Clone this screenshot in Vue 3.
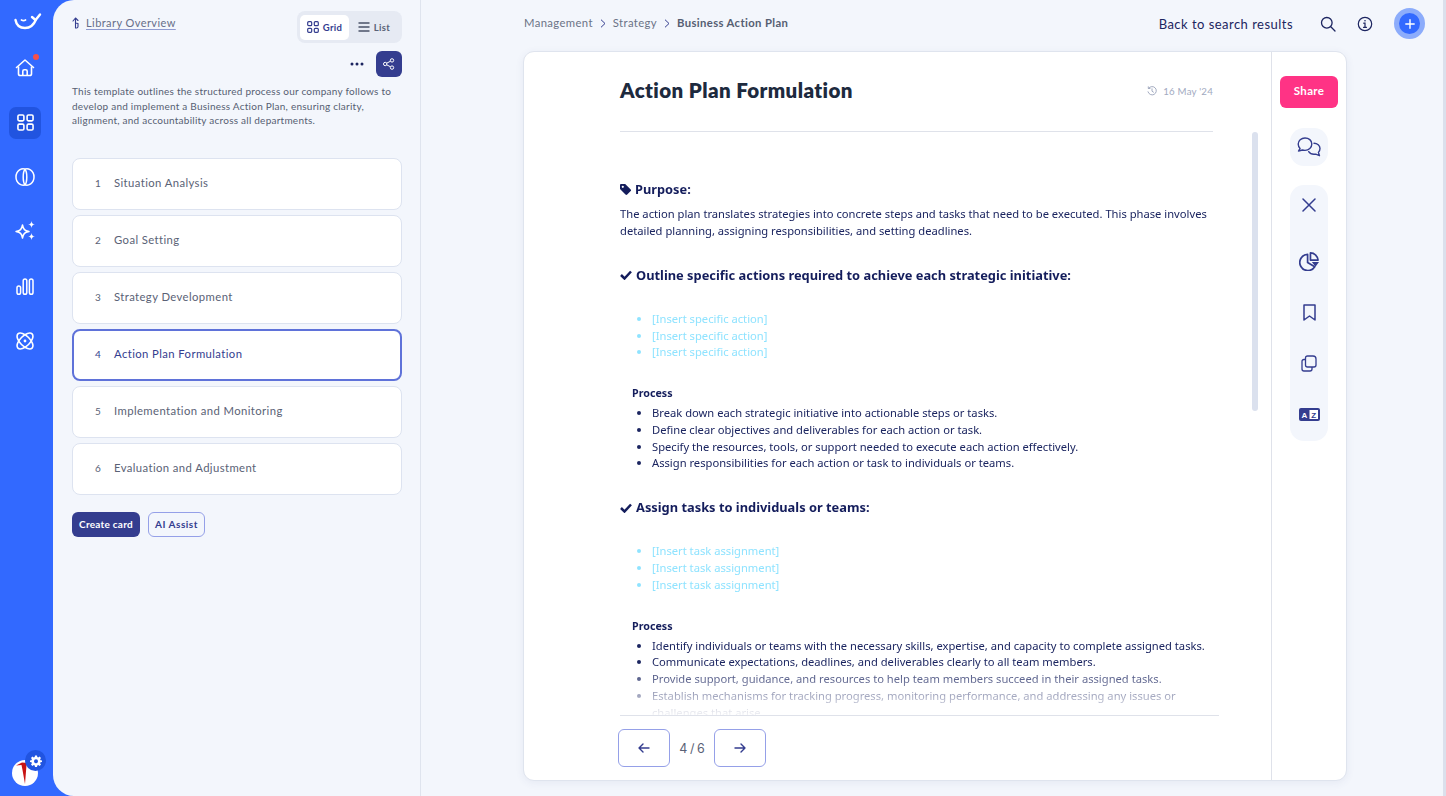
<script setup>
const steps = [
  'Situation Analysis',
  'Goal Setting',
  'Strategy Development',
  'Action Plan Formulation',
  'Implementation and Monitoring',
  'Evaluation and Adjustment'
]
const sections = [
  {
    title: 'Outline specific actions required to achieve each strategic initiative:',
    placeholder: '[Insert specific action]',
    process: [
      'Break down each strategic initiative into actionable steps or tasks.',
      'Define clear objectives and deliverables for each action or task.',
      'Specify the resources, tools, or support needed to execute each action effectively.',
      'Assign responsibilities for each action or task to individuals or teams.'
    ]
  },
  {
    title: 'Assign tasks to individuals or teams:',
    placeholder: '[Insert task assignment]',
    process: [
      'Identify individuals or teams with the necessary skills, expertise, and capacity to complete assigned tasks.',
      'Communicate expectations, deadlines, and deliverables clearly to all team members.',
      'Provide support, guidance, and resources to help team members succeed in their assigned tasks.',
      'Establish mechanisms for tracking progress, monitoring performance, and addressing any issues or challenges that arise.'
    ]
  }
]
</script>

<template>
  <div class="app">
    <nav class="rail">
      <svg class="logo" width="30" height="20" viewBox="0 0 30 20" fill="none" stroke="#fff" stroke-width="2.400" stroke-linecap="round" stroke-linejoin="round"><path d="M3.500 9c1 5.500 5 8 9.500 8 5 0 9-3.500 11-8.500L28 3.500"/><path d="M20 6l3.500 3"/><path d="M9.500 9c1.200.8 2.800.8 4 0" stroke-width="1.800"/></svg>
      <div class="nav-item home">
        <svg width="20" height="20" viewBox="0 0 20 20" fill="none" stroke="#fff" stroke-width="1.600" stroke-linejoin="round"><path d="M1.500 9.500 10 2l8.500 7.500" stroke-linecap="round"/><path d="M3.500 8.500v7.200c0 1 .7 1.800 1.800 1.800h9.400c1.100 0 1.800-.8 1.800-1.800V8.500"/><path d="M7.800 17.500v-4.300c0-.8.600-1.400 1.400-1.400h1.600c.8 0 1.400.6 1.400 1.400v4.300"/></svg>
        <span class="dot"></span>
      </div>
      <div class="nav-item active">
        <svg width="17" height="17" viewBox="0 0 18 18" fill="none" stroke="#fff" stroke-width="1.700"><rect x="1" y="1" width="6.300" height="6.300" rx="1.400"/><rect x="10.700" y="1" width="6.300" height="6.300" rx="1.400"/><rect x="1" y="10.700" width="6.300" height="6.300" rx="1.400"/><rect x="10.700" y="10.700" width="6.300" height="6.300" rx="1.400"/></svg>
      </div>
      <div class="nav-item">
        <svg width="20" height="20" viewBox="0 0 20 20" fill="none" stroke="#fff" stroke-width="1.500"><path d="M10 2.200C7.500.800 1 2.800 1 10c0 6.500 5.800 9 9 7.800 3.200 1.200 9-1.300 9-7.800 0-7.200-6.500-9.200-9-7.800Z"/><path d="M10 2.200c-1.300 1.500-1.800 4.500-1.800 7.800s.5 6.300 1.800 7.800c1.300-1.500 1.800-4.500 1.800-7.800s-.5-6.300-1.800-7.800Z"/></svg>
      </div>
      <div class="nav-item">
        <svg width="21" height="23" viewBox="0 0 21 23" fill="none" stroke="#fff" stroke-width="1.500" stroke-linejoin="round"><path d="M7.500 5c.8 4.500 2.200 5.700 6.500 6.500-4.300.8-5.700 2-6.500 6.500-.8-4.500-2.200-5.700-6.500-6.500C5.300 10.700 6.700 9.500 7.500 5Z"/><path fill="#fff" stroke="none" d="M16.500 1c.3 2.300 1.200 3.200 3.500 3.500-2.300.3-3.200 1.200-3.500 3.500-.3-2.300-1.200-3.200-3.500-3.500 2.300-.3 3.200-1.200 3.500-3.500ZM16.500 13c.3 2.300 1.200 3.200 3.500 3.500-2.300.3-3.200 1.200-3.500 3.500-.3-2.300-1.200-3.200-3.500-3.500 2.300-.3 3.200-1.200 3.500-3.500Z"/></svg>
      </div>
      <div class="nav-item">
        <svg width="18" height="17" viewBox="0 0 18 17" fill="none" stroke="#fff" stroke-width="1.500"><rect x="1" y="8" width="3.600" height="8.200" rx="1.800"/><rect x="7.200" y="1" width="3.600" height="15.200" rx="1.800"/><rect x="13.400" y="1" width="3.600" height="15.200" rx="1.800"/></svg>
      </div>
      <div class="nav-item">
        <svg width="18" height="18" viewBox="0 0 18 18" fill="none" stroke="#fff" stroke-width="1.600"><ellipse cx="9" cy="9" rx="10" ry="5" transform="rotate(45 9 9)"/><ellipse cx="9" cy="9" rx="10" ry="5" transform="rotate(-45 9 9)"/><circle cx="9" cy="9" r="1.400" fill="#fff" stroke="none"/></svg>
      </div>
      <div class="account">
        <svg class="avatar" width="26" height="26" viewBox="0 0 26 26"><circle cx="13" cy="13" r="13" fill="#fff"/><path d="M4 5.500 10 2.500l6 .5 1 2.500-2.500-.5-1.500 19-2.500-14L9.500 5Z" fill="#c81414"/></svg>
        <span class="gear">
          <svg width="12" height="12" viewBox="0 0 24 24" fill="#fff"><path fill-rule="evenodd" d="M10 1h4l.6 3.200 1.900.8L19.200 3.200 22 6l-1.800 2.700.8 1.900L24 11v3l-3 .6-.8 1.900 1.800 2.700L19.200 22l-2.700-1.800-1.900.8L14 24h-4l-.6-3-1.900-.8L4.800 22 2 19.200l1.800-2.700-.8-1.900L0 14v-3l3-.4.800-1.900L2 6l2.800-2.800L7.500 5l1.900-.8ZM12 8.500a4 4 0 1 0 0 8 4 4 0 0 0 0-8Z"/></svg>
        </span>
      </div>
    </nav>

    <div class="shell">
      <aside class="library">
        <div class="lib-top">
          <a class="overview">
            <svg width="8" height="12" viewBox="0 0 8 12" fill="none" stroke="#343d8f" stroke-width="1.100" stroke-linecap="round" stroke-linejoin="round"><path d="M3.500 11V2M1 4l2.500-3L6 3.500M6 6.500v3c0 1-.6 1.500-1.500 1.500M3.500 6 6 6.500"/></svg>
            <span>Library Overview</span>
          </a>
          <div class="toggle">
            <span class="tog on">
              <svg width="12" height="12" viewBox="0 0 12 12" fill="none" stroke="#343d8f" stroke-width="1.200"><rect x=".7" y=".7" width="4" height="4" rx="1"/><rect x="7.300" y=".7" width="4" height="4" rx="1"/><rect x=".7" y="7.300" width="4" height="4" rx="1"/><rect x="7.300" y="7.300" width="4" height="4" rx="1"/></svg>
              Grid
            </span>
            <span class="tog">
              <svg width="12" height="12" viewBox="0 0 12 12" fill="none" stroke="#4a5268" stroke-width="1.300"><path d="M.5 2h11M.5 6h11M.5 10h11"/></svg>
              List
            </span>
          </div>
        </div>
        <div class="lib-actions">
          <svg width="14" height="4" viewBox="0 0 14 4" fill="#1c2560"><circle cx="2" cy="2" r="1.500"/><circle cx="7" cy="2" r="1.500"/><circle cx="12" cy="2" r="1.500"/></svg>
          <span class="share-square">
            <svg width="12" height="12" viewBox="0 0 12 12" fill="none" stroke="#fff" stroke-width="1"><circle cx="2.200" cy="6" r="1.700"/><circle cx="9" cy="2.400" r="1.700"/><circle cx="9" cy="9.600" r="1.700"/><path d="M3.700 5.200 7.500 3.200M3.700 6.800l3.800 2"/></svg>
          </span>
        </div>
        <p class="lib-desc">This template outlines the structured process our company follows to develop and implement a Business Action Plan, ensuring clarity, alignment, and accountability across all departments.</p>
        <ul class="steps">
          <li v-for="(s, i) in steps" :key="s" class="step" :class="{ current: i === 3 }">
            <span class="num">{{ i + 1 }}</span>
            <span>{{ s }}</span>
          </li>
        </ul>
        <div class="lib-buttons">
          <button class="btn solid">Create card</button>
          <button class="btn outline">AI Assist</button>
        </div>
      </aside>

      <main class="main">
        <header class="topbar">
          <div class="crumbs">
            <span>Management</span>
            <svg class="chev" width="6" height="9" viewBox="0 0 6 9" fill="none" stroke="#343d8f" stroke-width="1"><path d="m1 .7 4 3.800-4 3.800"/></svg>
            <span>Strategy</span>
            <svg class="chev" width="6" height="9" viewBox="0 0 6 9" fill="none" stroke="#343d8f" stroke-width="1"><path d="m1 .7 4 3.800-4 3.800"/></svg>
            <b>Business Action Plan</b>
          </div>
          <div class="top-right">
            <span class="back">Back to search results</span>
            <svg width="16" height="16" viewBox="0 0 16 16" fill="none" stroke="#1c2560" stroke-width="1.300" stroke-linecap="round"><circle cx="6.800" cy="6.800" r="5.300"/><path d="m10.800 10.800 4.200 4.200"/></svg>
            <svg width="16" height="16" viewBox="0 0 16 16" fill="none" stroke="#1c2560" stroke-width="1.200"><circle cx="8" cy="8" r="6.700"/><path d="M6.700 7.200H8v4M6.500 11.300h3" stroke-linecap="round"/><circle cx="8" cy="4.800" r=".8" fill="#1c2560" stroke="none"/></svg>
            <span class="plus">
              <svg width="10" height="10" viewBox="0 0 10 10" stroke="#fff" stroke-width="1.400" stroke-linecap="round"><path d="M5 .8v8.400M.8 5h8.400"/></svg>
            </span>
          </div>
        </header>

        <section class="card">
          <div class="doc">
            <div class="doc-head">
              <h1>Action Plan Formulation</h1>
              <span class="date">
                <svg width="10" height="10" viewBox="0 0 10 10" fill="none" stroke="#9aa3ba" stroke-width=".9" stroke-linecap="round"><path d="M1.700 2.200A4.200 4.200 0 1 1 1 5.800M1.300 .8v1.700H3M5 2.800v2.400l1.500 1"/></svg>
                16 May '24
              </span>
            </div>
            <div class="doc-body">
              <h3 class="purpose">
                <svg width="12" height="12" viewBox="0 0 12 12" fill="#141d5c"><path d="M0 1.200C0 .5.500 0 1.200 0h3.500c.4 0 .7.100 1 .4l5 5c.5.500.5 1.200 0 1.700L7.200 10.600c-.5.500-1.200.5-1.700 0l-5-5C.1 5.300 0 5 0 4.600ZM2.800 3.900a1.100 1.100 0 1 0 0-2.200 1.100 1.100 0 0 0 0 2.200Z"/></svg>
                Purpose:
              </h3>
              <p class="para">The action plan translates strategies into concrete steps and tasks that need to be executed. This phase involves detailed planning, assigning responsibilities, and setting deadlines.</p>
              <template v-for="sec in sections" :key="sec.title">
                <h3 class="sec-title">
                  <svg width="12" height="10" viewBox="0 0 12 10" fill="none" stroke="#141d5c" stroke-width="2.500"><path d="m1 5 3.500 3.500L11 1.500"/></svg>
                  {{ sec.title }}
                </h3>
                <ul class="placeholders">
                  <li v-for="n in 3" :key="n">{{ sec.placeholder }}</li>
                </ul>
                <h4 class="process">Process</h4>
                <ul class="process-list">
                  <li v-for="t in sec.process" :key="t">{{ t }}</li>
                </ul>
              </template>
            </div>
            <span class="scroll-thumb"></span>
            <footer class="doc-foot">
              <button class="page-btn">
                <svg width="12" height="10" viewBox="0 0 12 10" fill="none" stroke="#343d8f" stroke-width="1.400" stroke-linecap="round" stroke-linejoin="round"><path d="M11 5H1M5 1 1 5l4 4"/></svg>
              </button>
              <span class="count">4 / 6</span>
              <button class="page-btn">
                <svg width="12" height="10" viewBox="0 0 12 10" fill="none" stroke="#343d8f" stroke-width="1.400" stroke-linecap="round" stroke-linejoin="round"><path d="M1 5h10M7 1l4 4-4 4"/></svg>
              </button>
            </footer>
          </div>

          <aside class="tools">
            <button class="share">Share</button>
            <div class="tool-pill single">
              <svg width="25" height="20" viewBox="0 0 25 20" fill="none" stroke="#343d8f" stroke-width="1.400" stroke-linejoin="round" stroke-linecap="round"><path d="M8 1C4.200 1 1.200 3.500 1.200 7c0 1.800.7 3.300 1.900 4.400L1.500 14l4-1c.8.300 1.600.4 2.500.4 3.800 0 6.800-2.700 6.800-6.400S11.800 1 8 1Z"/><path d="M17 6.300c3.300 0 6 2.300 6 5.300 0 1.500-.6 2.800-1.600 3.800l1.100 3.300-3.800-1.600c-.6.200-1.200.2-1.800.2-2.200 0-4.200-1-5.200-2.600"/></svg>
            </div>
            <div class="tool-pill stack">
              <svg width="14" height="14" viewBox="0 0 14 14" stroke="#343d8f" stroke-width="1.500" stroke-linecap="round"><path d="m1 1 12 12M13 1 1 13"/></svg>
              <svg width="21" height="19" viewBox="0 0 22 20" fill="none" stroke="#343d8f" stroke-width="1.800"><path d="M9 2.500a8.500 8.500 0 1 0 7.500 13l-7.500-4.500Z" stroke-linejoin="round"/><path d="M12 1v7.500h8A8 8 0 0 0 12 1Z" stroke-linejoin="round"/><path d="M13.500 10.500H21l-3.700 5Z" fill="#343d8f" stroke="none"/></svg>
              <svg width="13" height="17" viewBox="0 0 13 17" fill="none" stroke="#343d8f" stroke-width="1.500" stroke-linejoin="round"><path d="M1 1h11v15l-5.500-4L1 16Z"/></svg>
              <svg width="16" height="17" viewBox="0 0 16 17" fill="none" stroke="#343d8f" stroke-width="1.300" stroke-linejoin="round"><path d="M6.500 1h5.500c1.700 0 3 1.300 3 3v6c0 1-.8 2-2 2H6.500c-1.200 0-2-1-2-2V3c0-1.200.8-2 2-2Z"/><path d="M4.500 4.500H3c-1.200 0-2 .8-2 2V14c0 1.200.8 2 2 2h6c1.200 0 2-.8 2-2v-2"/></svg>
              <svg width="21" height="13" viewBox="0 0 21 13"><rect width="21" height="13" rx="2" fill="#343d8f"/><rect x="10.500" y="2" width="8.500" height="9" fill="#fff"/><text x="5.300" y="9.800" font-size="8" font-weight="700" text-anchor="middle" fill="#fff" font-family="Liberation Sans">A</text><text x="14.800" y="9.800" font-size="8" font-weight="700" text-anchor="middle" fill="#343d8f" font-family="Liberation Sans">Z</text></svg>
            </div>
          </aside>
        </section>
      </main>
    </div>
  </div>
</template>

<style>
html, body { margin: 0; background: #3269ff; overflow: hidden; }
</style>

<style scoped>
* { box-sizing: border-box; }
.app {
  display: flex;
  width: 1446px;
  height: 796px;
  background: #3269ff;
  font-family: "Lato", "Noto Sans", sans-serif;
  overflow: hidden;
}
.rail {
  width: 53px;
  flex: none;
  display: flex;
  flex-direction: column;
  align-items: center;
  position: relative;
}
.logo { position: absolute; left: 12px; top: 11px; }
.nav-item {
  width: 32px;
  height: 32px;
  margin-right: 3px;
  display: flex;
  align-items: center;
  justify-content: center;
  border-radius: 7px;
  position: relative;
  margin-bottom: 22.500px;
}
.home { margin-top: 52px; }
.active { background: #2154e0; }
.dot {
  position: absolute;
  top: 2px;
  right: 2px;
  width: 6px;
  height: 6px;
  border-radius: 50%;
  background: #f5504a;
}
.account { margin-top: auto; width: 53px; height: 46px; position: relative; flex: none; margin-bottom: 0; }
.avatar { position: absolute; left: 12px; top: 10px; }
.gear {
  position: absolute;
  left: 25px;
  top: 0;
  width: 21px;
  height: 21px;
  border-radius: 50%;
  background: #2154e0;
  display: flex;
  align-items: center;
  justify-content: center;
}
.shell {
  flex: 1;
  display: flex;
  background: #f3f6fc;
  border-radius: 21px 0 0 21px;
  border-right: 3px solid #dbe0ec;
}
.library {
  width: 368px;
  flex: none;
  border-right: 1px solid #dfe4ee;
  padding: 11px 18px 0 19px;
}
.lib-top { display: flex; justify-content: space-between; align-items: flex-start; }
.overview {
  display: flex;
  align-items: center;
  gap: 6px;
  margin-top: 5px;
  font-size: 11px;
  letter-spacing: .43px;
  color: #666e88;
}
.overview span { text-decoration: underline; text-decoration-color: #8f9bd0; text-underline-offset: 2px; }
.toggle {
  display: flex;
  align-items: center;
  width: 105px;
  height: 32px;
  padding: 4px 3px;
  background: #e6eaf3;
  border-radius: 8px;
}
.tog {
  display: flex;
  align-items: center;
  justify-content: center;
  gap: 4px;
  height: 25px;
  flex: 1;
  font-size: 9.500px;
  font-weight: 700;
  letter-spacing: .3px;
  color: #5a6278;
  border-radius: 5px;
}
.tog.on { background: #fff; color: #343d8f; flex: 0 0 49px; }
.lib-actions {
  display: flex;
  justify-content: flex-end;
  align-items: center;
  gap: 12px;
  margin-top: 8px;
}
.share-square {
  width: 26px;
  height: 26px;
  background: #343d8f;
  border-radius: 6px;
  display: flex;
  align-items: center;
  justify-content: center;
}
.lib-desc {
  margin: 7px 0 0;
  font-size: 10px;
  line-height: 14.700px;
  letter-spacing: .24px;
  color: #565e72;
}
.steps {
  list-style: none;
  margin: 30px 0 0;
  padding: 0;
  display: flex;
  flex-direction: column;
  gap: 5px;
}
.step {
  height: 52px;
  display: flex;
  align-items: center;
  padding: 0 0 3px 22px;
  background: #fff;
  border: 1px solid #dde3f0;
  border-radius: 8px;
  font-size: 11.300px;
  letter-spacing: .4px;
  color: #5a6276;
}
.num { width: 19px; font-size: 10px; letter-spacing: 0; }
.step.current { border: 2px solid #5f72d9; padding-left: 21px; color: #343d8f; }
.lib-buttons { display: flex; gap: 8px; margin-top: 17px; }
.btn {
  height: 25px;
  font: 700 10px "Lato", sans-serif;
  letter-spacing: .25px;
  border-radius: 6px;
  padding: 0 0 2px;
}
.solid { width: 68px; background: #343d8f; color: #fff; border: none; }
.outline { width: 57px; background: transparent; color: #343d8f; border: 1px solid #95a0e8; letter-spacing: .5px; }
.main { flex: 1; display: flex; flex-direction: column; min-width: 0; }
.topbar {
  height: 51px;
  flex: none;
  display: flex;
  justify-content: space-between;
  padding: 16px 18px 0 103px;
}
.crumbs {
  display: flex;
  align-items: center;
  gap: 7px;
  height: 15px;
  margin-top: -1px;
  font-size: 11.300px;
  letter-spacing: .37px;
  color: #6b7386;
}
.crumbs b { color: #565e72; font-weight: 700; }
.chev { margin-top: 2px; }
.top-right { display: flex; align-items: center; height: 15px; color: #1c2560; }
.back { font-size: 13px; margin-right: 27px; letter-spacing: .47px; }
.top-right svg + svg { margin-left: 21px; }
.plus {
  margin-left: 21px;
  width: 31px;
  height: 31px;
  border-radius: 50%;
  background: #3269ff;
  border: 5px solid #8cacfb;
  display: flex;
  align-items: center;
  justify-content: center;
}
.card {
  margin: 0 0 0 102px;
  width: 824px;
  height: 730px;
  background: #fff;
  border: 1px solid #dfe4ee;
  border-radius: 11px;
  box-shadow: 0 2px 8px rgba(50, 70, 130, .07);
  display: flex;
  overflow: hidden;
}
.doc {
  width: 747px;
  flex: none;
  position: relative;
  display: flex;
  flex-direction: column;
  padding-left: 96px;
}
.doc-head {
  width: 593px;
  height: 80px;
  flex: none;
  display: flex;
  justify-content: space-between;
  padding-top: 26px;
  border-bottom: 1px solid #dfe2ea;
}
.doc-head h1 {
  margin: 0;
  font-size: 20.500px;
  line-height: 25px;
  font-weight: 800;
  letter-spacing: .4px;
  color: #1d2a3e;
}
.date {
  display: flex;
  align-items: center;
  gap: 6px;
  height: 26px;
  font-size: 9.700px;
  letter-spacing: .2px;
  color: #a2aabf;
}
.doc-body {
  width: 599px;
  flex: 1;
  min-height: 0;
  overflow: hidden;
  padding-top: 49px;
  font-family: "Noto Sans", sans-serif;
  color: #1b2560;
  font-size: 11.200px;
  line-height: 16.750px;
  -webkit-mask-image: linear-gradient(to bottom, #000 91%, rgba(0,0,0,.06) 100%);
  mask-image: linear-gradient(to bottom, #000 91%, rgba(0,0,0,.06) 100%);
}
h3 {
  margin: 0;
  color: #141d5c;
  font-weight: 700;
  display: flex;
  align-items: center;
}
.purpose { font-size: 12.800px; line-height: 17px; gap: 3px; }
.para { margin: 8px 0 0; }
.sec-title { font-size: 12.850px; line-height: 17px; margin-top: 27px; gap: 4px; }
.placeholders, .process-list { margin: 0; padding-left: 32px; }
.process-list { margin-bottom: 1.700px; }
.placeholders { color: #8fe3ff; margin-top: 27.300px; }
.process { margin: 24px 0 3px 12px; font-size: 10.700px; line-height: 17px; font-weight: 700; color: #141d5c; }
.scroll-thumb {
  position: absolute;
  left: 728px;
  top: 80px;
  width: 6px;
  height: 279px;
  border-radius: 3px;
  background: #dbe1ee;
}
.doc-foot {
  width: 599px;
  height: 65px;
  flex: none;
  border-top: 1px solid #dfe2ea;
  display: flex;
  align-items: center;
  gap: 9px;
}
.page-btn {
  width: 52px;
  height: 38px;
  margin-left: -2px;
  background: #fff;
  border: 1px solid #95a0e8;
  border-radius: 6px;
  display: flex;
  align-items: center;
  justify-content: center;
  padding: 0;
}
.page-btn + .count + .page-btn { margin-left: 0; }
.count { width: 26px; text-align: center; white-space: nowrap; font: 12.500px "Inter", sans-serif; word-spacing: -1px; color: #5a6276; }
.tools {
  flex: 1;
  border-left: 1px solid #dfe2ea;
  display: flex;
  flex-direction: column;
  align-items: center;
  padding-top: 24px;
}
.share {
  width: 58px;
  height: 32px;
  background: #ff3385;
  color: #fff;
  border: none;
  border-radius: 6px;
  font: 700 11.500px "Lato", sans-serif;
  letter-spacing: .3px;
  padding: 0 0 3px;
}
.tool-pill {
  width: 38px;
  background: #f3f6fc;
  border-radius: 14px;
  display: flex;
  align-items: center;
  justify-content: center;
}
.single { height: 38px; margin-top: 20px; }
.stack {
  margin-top: 19px;
  height: 256px;
  flex-direction: column;
  justify-content: flex-start;
  padding-top: 13px;
  gap: 0;
}
.stack svg:nth-child(2) { margin-top: 40px; }
.stack svg:nth-child(3) { margin-top: 33px; }
.stack svg:nth-child(4) { margin-top: 34px; }
.stack svg:nth-child(5) { margin-top: 36px; }
</style>
